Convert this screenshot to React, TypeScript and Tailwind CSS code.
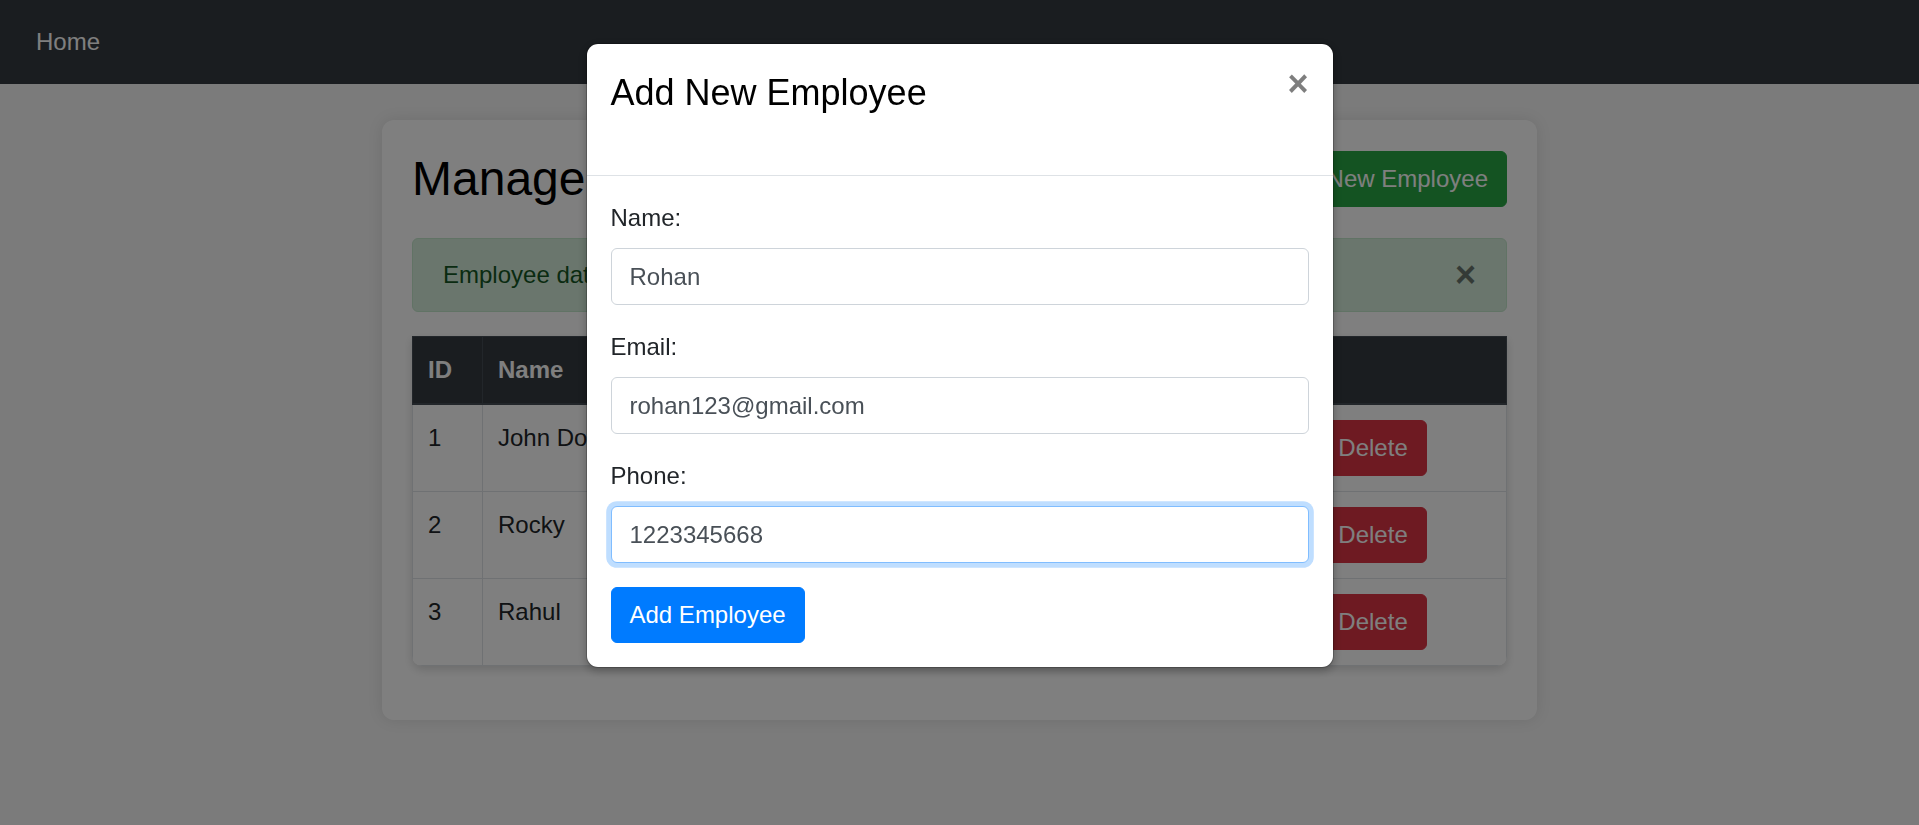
import React from "react";

type Employee = { id: number; name: string; email: string; phone: string };

const EMPLOYEES: Employee[] = [
  { id: 1, name: "John Doe", email: "john@example.com", phone: "9876543210" },
  { id: 2, name: "Rocky", email: "rocky@example.com", phone: "9123456780" },
  { id: 3, name: "Rahul", email: "rahul@example.com", phone: "9988776655" },
];

const FIELDS = [
  { label: "Name:", value: "Rohan", type: "text", focused: false },
  { label: "Email:", value: "rohan123@gmail.com", type: "email", focused: false },
  { label: "Phone:", value: "1223345668", type: "text", focused: true },
];

function Navbar() {
  return (
    <nav className="h-[84px] bg-[#343a40] px-[24px] py-[12px]">
      <a href="#" className="block w-fit px-[12px] py-[12px] text-[24px] leading-[36px] text-white">
        Home
      </a>
    </nav>
  );
}

function EmployeeTable() {
  return (
    <div className="mb-[24px] overflow-hidden rounded-b-[10px] shadow-[0_4px_10px_rgba(0,0,0,0.15)]">
      <table className="w-full table-fixed border-collapse border border-[#dee2e6] text-[24px] leading-[36px] text-[#212529]">
        <colgroup>
          <col className="w-[70px]" />
          <col className="w-[200px]" />
          <col className="w-[330px]" />
          <col className="w-[200px]" />
          <col />
        </colgroup>
        <thead>
          <tr className="bg-[#343a40] text-white">
            {["ID", "Name", "Email", "Phone", "Actions"].map((h) => (
              <th
                key={h}
                className="border border-b-2 border-[#454d55] p-[15px] text-left font-bold"
              >
                {h}
              </th>
            ))}
          </tr>
        </thead>
        <tbody>
          {EMPLOYEES.map((e) => (
            <tr key={e.id} className="bg-white">
              <td className="border border-[#dee2e6] p-[15px] align-top">{e.id}</td>
              <td className="border border-[#dee2e6] p-[15px] align-top">{e.name}</td>
              <td className="border border-[#dee2e6] p-[15px] align-top">{e.email}</td>
              <td className="border border-[#dee2e6] p-[15px] align-top">{e.phone}</td>
              <td className="border border-[#dee2e6] p-[15px] align-top">
                <div className="flex gap-[12px]">
                  <button className="h-[56px] rounded-[6px] border border-[#ffc107] bg-[#ffc107] px-[18px] text-[#212529]">
                    Edit
                  </button>
                  <button className="h-[56px] rounded-[6px] border border-[#dc3545] bg-[#dc3545] px-[18px] text-white">
                    Delete
                  </button>
                </div>
              </td>
            </tr>
          ))}
        </tbody>
      </table>
    </div>
  );
}

function AddEmployeeModal() {
  return (
    <div className="fixed inset-0 flex items-start justify-center bg-black/50 pt-[43px]">
      <div className="w-[748px] rounded-[12px] border border-black/20 bg-white bg-clip-padding shadow-[0_3px_9px_rgba(0,0,0,0.25)]">
        <div className="flex h-[132px] items-start justify-between border-b border-[#dee2e6] px-[24px] pt-[22px]">
          <h2 className="text-[36px] leading-[54px] font-normal text-black">Add New Employee</h2>
          <button className="text-[36px] leading-[36px] font-bold text-black opacity-50">×</button>
        </div>
        <form className="p-[24px]" onSubmit={(ev) => ev.preventDefault()}>
          {FIELDS.map((f) => (
            <div key={f.label} className="mb-[24px]">
              <label className="mb-[12px] block text-[24px] leading-[36px] text-[#212529]">
                {f.label}
              </label>
              <input
                type={f.type}
                defaultValue={f.value}
                className={
                  f.focused
                    ? "block h-[57px] w-full rounded-[6px] border border-[#80bdff] bg-white px-[18px] text-[24px] text-[#495057] shadow-[0_0_0_4.8px_rgba(0,123,255,0.25)] outline-none"
                    : "block h-[57px] w-full rounded-[6px] border border-[#ced4da] bg-white px-[18px] text-[24px] text-[#495057] outline-none"
                }
              />
            </div>
          ))}
          <button
            type="submit"
            className="h-[56px] rounded-[6px] border border-[#007bff] bg-[#007bff] px-[18px] text-[24px] leading-[36px] text-white"
          >
            Add Employee
          </button>
        </form>
      </div>
    </div>
  );
}

export default function App() {
  return (
    <div className="min-h-screen bg-[#f6f6f6] font-['Liberation_Sans',Arial,sans-serif]">
      <Navbar />
      <main className="pt-[36px]">
        <div className="mx-auto w-[1155px] rounded-[12px] bg-white p-[30px] shadow-[0_0_15px_rgba(0,0,0,0.1)]">
          <div className="mb-[30px] flex items-center justify-between">
            <h1 className="text-[48px] leading-[57.6px] font-normal text-black">Manage Employees</h1>
            <button className="h-[56px] rounded-[6px] border border-[#28a745] bg-[#28a745] px-[18px] text-[24px] leading-[36px] text-white">
              Add New Employee
            </button>
          </div>
          <div className="relative mb-[24px] rounded-[6px] border border-[#c3e6cb] bg-[#d4edda] py-[18px] pl-[30px] pr-[96px] text-[24px] leading-[36px] text-[#155724]">
            Employee data added successfully!
            <button className="absolute right-0 top-0 px-[30px] py-[18px] text-[36px] leading-[36px] font-bold text-black opacity-50">
              ×
            </button>
          </div>
          <EmployeeTable />
        </div>
      </main>
      <AddEmployeeModal />
    </div>
  );
}
